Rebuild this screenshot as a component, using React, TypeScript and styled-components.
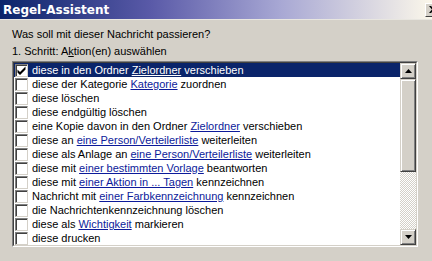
import React from 'react';
import styled, { createGlobalStyle } from 'styled-components';

const GlobalStyle = createGlobalStyle`
  html, body {
    margin: 0;
    padding: 0;
    background: #d4d0c8;
  }
`;

const Dialog = styled.div`
  width: 432px;
  height: 261px;
  overflow: hidden;
  background: #d4d0c8;
  font-family: "Liberation Sans", Arial, sans-serif;
  font-size: 11px;
  color: #000;
`;

const TitleBar = styled.div`
  height: 19px;
  display: flex;
  align-items: center;
  justify-content: space-between;
  padding-left: 3px;
  background: linear-gradient(to right, #0a246a 0%, #5a5aa8 35%, #a8a8d4 65%, #fbf7ea 100%);
  border-bottom: 1px solid #e8e6e0;
  overflow: hidden;
`;

const Title = styled.span`
  color: #fff;
  font-weight: bold;
  font-size: 12px;
  font-family: "DejaVu Sans", Verdana, sans-serif;
`;

const CloseButton = styled.div`
  width: 16px;
  height: 14px;
  margin-right: -9px;
  flex: none;
  box-sizing: border-box;
  background: #d4d0c8;
  border: 1px solid;
  border-color: #fff #404040 #404040 #fff;
  display: flex;
  align-items: center;
  justify-content: center;
`;

const Body = styled.div`
  padding: 6px 0 0 12px;
`;

const Label = styled.div`
  height: 17px;
  line-height: 17px;
  white-space: nowrap;
`;

const Accel = styled.span`
  text-decoration: underline;
`;

const ListFrame = styled.div`
  margin-top: 1px;
  width: 406px;
  height: 186px;
  box-sizing: border-box;
  border: 1px solid;
  border-color: #808080 #fff #fff #808080;
`;

const ListInner = styled.div`
  height: 100%;
  box-sizing: border-box;
  border: 1px solid;
  border-color: #404040 #d4d0c8 #d4d0c8 #404040;
  background: #fff;
  display: flex;
`;

const Rows = styled.div`
  flex: 1;
  overflow: hidden;
`;

const Row = styled.div<{ $selected?: boolean }>`
  height: 14px;
  display: flex;
  align-items: center;
  white-space: nowrap;
  background: ${(p) => (p.$selected ? '#0a246a' : 'transparent')};
  color: ${(p) => (p.$selected ? '#fff' : '#000')};
`;

const Check = styled.span`
  width: 13px;
  height: 13px;
  box-sizing: border-box;
  margin: 0 4px 0 1px;
  flex: none;
  background: #fff;
  border: 1px solid;
  border-color: #808080 #d4d0c8 #d4d0c8 #808080;
  box-shadow: inset 1px 1px 0 #404040;
  display: flex;
  align-items: center;
  justify-content: center;
`;

const Link = styled.span<{ $selected?: boolean }>`
  color: ${(p) => (p.$selected ? '#fff' : '#0c1a9a')};
  text-decoration: underline;
`;

const ScrollBar = styled.div`
  width: 16px;
  flex: none;
  display: flex;
  flex-direction: column;
  background: repeating-conic-gradient(#fff 0 25%, #d4d0c8 0 50%) 0 0 / 2px 2px;
`;

const Raised = styled.div<{ $h: number }>`
  height: ${(p) => p.$h}px;
  flex: none;
  box-sizing: border-box;
  background: #d4d0c8;
  border: 1px solid;
  border-color: #d4d0c8 #404040 #404040 #d4d0c8;
  box-shadow: inset 1px 1px 0 #fff, inset -1px -1px 0 #808080;
  display: flex;
  align-items: center;
  justify-content: center;
`;

const Track = styled.div`
  flex: 1;
`;

const Arrow = ({ up }: { up?: boolean }) => (
  <svg width="7" height="4" viewBox="0 0 7 4">
    <path d={up ? 'M3.5 0 L7 4 L0 4 Z' : 'M0 0 L7 0 L3.5 4 Z'} fill="#000" />
  </svg>
);

const Tick = () => (
  <svg width="9" height="9" viewBox="0 0 9 9">
    <path d="M0.5 3.5 L3 6 L8.5 0.5 L8.5 3.5 L3 9 L0.5 6.5 Z" fill="#000" />
  </svg>
);

const CloseIcon = () => (
  <svg width="8" height="7" viewBox="0 0 8 7">
    <path d="M0 0 L2 0 L4 2.2 L6 0 L8 0 L5 3.5 L8 7 L6 7 L4 4.8 L2 7 L0 7 L3 3.5 Z" fill="#000" />
  </svg>
);

type Part = string | { link: string };
const items: Part[][] = [
  ['diese in den Ordner ', { link: 'Zielordner' }, ' verschieben'],
  ['diese der Kategorie ', { link: 'Kategorie' }, ' zuordnen'],
  ['diese löschen'],
  ['diese endgültig löschen'],
  ['eine Kopie davon in den Ordner ', { link: 'Zielordner' }, ' verschieben'],
  ['diese an ', { link: 'eine Person/Verteilerliste' }, ' weiterleiten'],
  ['diese als Anlage an ', { link: 'eine Person/Verteilerliste' }, ' weiterleiten'],
  ['diese mit ', { link: 'einer bestimmten Vorlage' }, ' beantworten'],
  ['diese mit ', { link: 'einer Aktion in ... Tagen' }, ' kennzeichnen'],
  ['Nachricht mit ', { link: 'einer Farbkennzeichnung' }, ' kennzeichnen'],
  ['die Nachrichtenkennzeichnung löschen'],
  ['diese als ', { link: 'Wichtigkeit' }, ' markieren'],
  ['diese drucken'],
];

export default function App() {
  return (
    <Dialog>
      <GlobalStyle />
      <TitleBar>
        <Title>Regel-Assistent</Title>
        <CloseButton>
          <CloseIcon />
        </CloseButton>
      </TitleBar>
      <Body>
        <Label>Was soll mit dieser Nachricht passieren?</Label>
        <Label>
          1. Schritt: A<Accel>k</Accel>tion(en) auswählen
        </Label>
        <ListFrame>
          <ListInner>
            <Rows>
              {items.map((parts, i) => (
                <Row key={i} $selected={i === 0}>
                  <Check>{i === 0 && <Tick />}</Check>
                  <span>
                    {parts.map((p, j) =>
                      typeof p === 'string' ? (
                        <React.Fragment key={j}>{p}</React.Fragment>
                      ) : (
                        <Link key={j} $selected={i === 0}>
                          {p.link}
                        </Link>
                      )
                    )}
                  </span>
                </Row>
              ))}
            </Rows>
            <ScrollBar>
              <Raised $h={16}>
                <Arrow up />
              </Raised>
              <Raised $h={93} />
              <Track />
              <Raised $h={16}>
                <Arrow />
              </Raised>
            </ScrollBar>
          </ListInner>
        </ListFrame>
      </Body>
    </Dialog>
  );
}
